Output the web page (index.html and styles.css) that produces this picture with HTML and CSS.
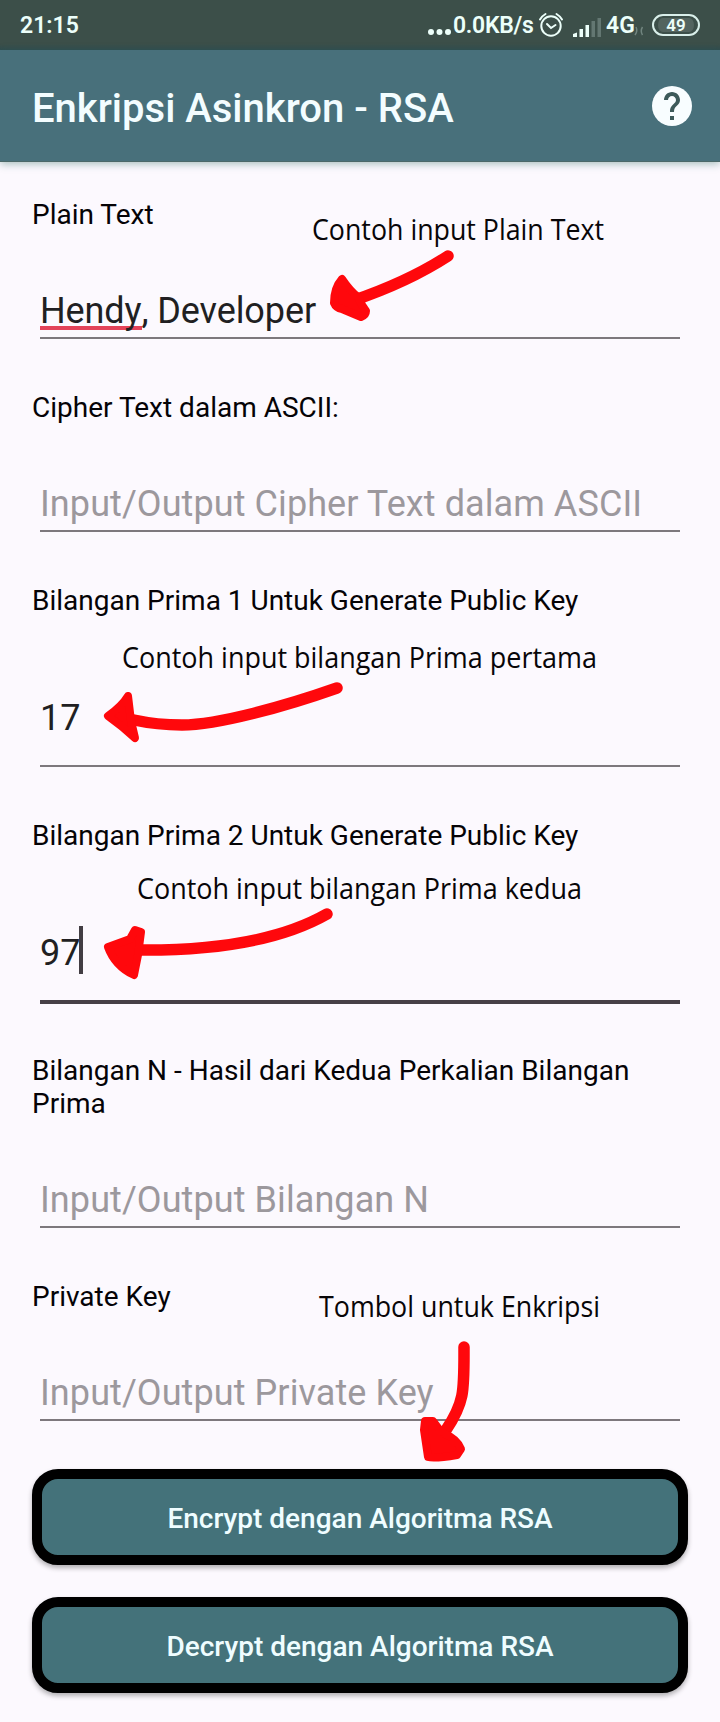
FILE: index.html
```html
<!DOCTYPE html>
<html lang="id">
<head>
<meta charset="utf-8">
<title>Enkripsi Asinkron - RSA</title>
<link rel="stylesheet" href="styles.css">
</head>
<body>
<div class="screen">
  <div class="status">
    <span class="clock">21:15</span>
    <div class="indicators">
      <svg class="dots" width="26" height="8" viewBox="0 0 26 8"><circle cx="4" cy="4" r="3"/><circle cx="12.500" cy="4" r="3"/><circle cx="21" cy="4" r="3"/></svg>
      <span class="speed">0.0KB/s</span>
      <svg class="alarm" width="26" height="26" viewBox="0 0 26 26"><circle cx="13" cy="14" r="9.700"/><path d="M9 12l4 4 4.500-3M2 7.500Q4 4 7.500 2M24 7.500Q22 4 18.500 2"/></svg>
      <svg class="signal" width="30" height="22" viewBox="0 0 30 22"><path d="M1 21v-3l4-1.500V21zM7.500 21v-8h3.500v8zM13.500 21V9H17v12z"/><path class="faint" d="M19.500 21V5H23v16zM25.500 21V2H29v19z"/></svg>
      <span class="net">4G</span>
      <svg class="data" width="10" height="14" viewBox="0 0 10 14"><path d="M1 12q3-4 1-8M8.500 4q-2.500 4 0 8"/></svg>
      <div class="battery"><span class="level">49</span></div>
    </div>
  </div>

  <div class="appbar">
    <h1 class="title">Enkripsi Asinkron - RSA</h1>
    <svg class="help" width="48" height="48" viewBox="0 0 24 24"><circle cx="12" cy="12" r="10" fill="#f8fdff"/><path fill="#3d5a5a" d="M13 19h-2v-2h2v2zm2.070-7.750l-.9.920C13.450 12.900 13 13.500 13 15h-2v-.5c0-1.100.450-2.100 1.170-2.830l1.240-1.260c.370-.360.590-.860.590-1.410 0-1.100-.9-2-2-2s-2 .9-2 2H8c0-2.210 1.790-4 4-4s4 1.790 4 4c0 .880-.360 1.680-.930 2.250z"/></svg>
  </div>

  <div class="form">
    <div class="field">
      <div class="label">Plain Text</div>
      <div class="input entered"><span class="misspelt">Hendy</span>, Developer</div>
    </div>
    <div class="field">
      <div class="label">Cipher Text dalam ASCII:</div>
      <div class="input hint">Input/Output Cipher Text dalam ASCII</div>
    </div>
    <div class="field">
      <div class="label">Bilangan Prima 1 Untuk Generate Public Key</div>
      <div class="input tall">17</div>
    </div>
    <div class="field focused">
      <div class="label">Bilangan Prima 2 Untuk Generate Public Key</div>
      <div class="input tall active">97<span class="caret"></span></div>
    </div>
    <div class="field">
      <div class="label">Bilangan N - Hasil dari Kedua Perkalian Bilangan Prima</div>
      <div class="input hint">Input/Output Bilangan N</div>
    </div>
    <div class="field">
      <div class="label">Private Key</div>
      <div class="input hint">Input/Output Private Key</div>
    </div>
    <div class="actions">
      <div class="button">Encrypt dengan Algoritma RSA</div>
      <div class="button">Decrypt dengan Algoritma RSA</div>
    </div>
  </div>

  <svg class="notes" width="720" height="1722" viewBox="0 0 720 1722">
    <g class="note">
      <text x="312" y="240" textLength="292" lengthAdjust="spacingAndGlyphs">Contoh input Plain Text</text>
      <text x="122" y="668" textLength="475" lengthAdjust="spacingAndGlyphs">Contoh input bilangan Prima pertama</text>
      <text x="137" y="899" textLength="445" lengthAdjust="spacingAndGlyphs">Contoh input bilangan Prima kedua</text>
      <text x="319" y="1317" textLength="281" lengthAdjust="spacingAndGlyphs">Tombol untuk Enkripsi</text>
    </g>
    <g class="shaft">
      <path d="M448 256Q408 282 352 301"/>
      <path d="M337 688C286 706 218 725 182 725C162 725 148 723 134 720"/>
      <path d="M327 914C278 942 210 951 135 950"/>
      <path d="M464 1347C464 1390 465 1402 446 1430"/>
    </g>
    <g class="head">
      <path d="M342 279Q334 288 334 303Q336 308 342 309L361 317Q366 315 366 311L362 305L358 297Q350 291 342 279Z"/>
      <path d="M128 696Q122 706 108 716Q122 726 135 738L131 721Z"/>
      <path d="M135 930L130 939L108 947Q115 966 134 975L138 955L141 932Z"/>
      <path d="M425 1421L424 1430L428 1457Q434 1459 457 1455L461 1449Q457 1439 445 1434Q438 1429 433 1421Z"/>
    </g>
  </svg>
</div>
</body>
</html>
```
FILE: styles.css
```css
* { box-sizing: border-box; }
body { margin: 0; background: #fcfaff; font-family: Roboto, sans-serif; }
.screen { position: relative; width: 720px; height: 1722px; overflow: hidden; background: #fcf9fe; }

.status {
  height: 50px; padding: 0 20px; display: flex; align-items: center; justify-content: space-between;
  background: linear-gradient(#3c4f49 44px, #304c4e 50px); color: #ecfffa;
  font-size: 23px; font-weight: 600; line-height: 26px;
}
.clock { padding-top: 2px; }
.indicators { display: flex; align-items: center; }
.dots { fill: #ecfffa; margin-top: 13px; }
.speed { width: 82px; padding-top: 2px; letter-spacing: -.3px; }
.alarm { margin-left: 3px; fill: none; stroke: #ecfffa; stroke-width: 2; stroke-linecap: round; }
.signal { margin: 3px 0 0 8px; fill: #ecfffa; }
.signal .faint { fill: #637772; }
.net { width: 28px; margin-left: 4px; padding-top: 2px; }
.data { margin: 10px 0 0; fill: none; stroke: #71857f; stroke-width: 1.500; }
.battery {
  width: 48px; height: 22px; margin: -1px 0 0 8px; border: 2px solid #d9efea; border-radius: 11px;
  background: linear-gradient(90deg, #53645f, #53645f) content-box; padding: 2px 4px;
  display: flex; align-items: center; justify-content: center; font-size: 17px; line-height: 18px;
}

.appbar {
  height: 112px; padding: 0 24px 0 32px; display: flex; align-items: center; justify-content: space-between;
  background: #48707b; border-bottom: 1px solid #4b6868; box-shadow: 0 2px 8px rgba(40, 100, 90, .4);
}
.title { margin: 5px 0 0; color: #f3fdff; font-size: 40px; font-weight: 500; line-height: 47px; }

.form { padding: 36px 32px 0; display: flex; flex-direction: column; }
.field { margin-bottom: 52px; }
.focused { margin-bottom: 50px; }
.label { color: #050306; font-size: 28px; line-height: 33px; }
.input {
  margin: 59px 8px 0; padding-bottom: 5px; border-bottom: 2px solid #7d787d;
  color: #211f22; font-size: 36px; line-height: 42px; white-space: nowrap;
}
.entered { letter-spacing: -.1px; }
.tall { margin-top: 80px; padding-bottom: 26px; }
.hint { color: #9c989d; letter-spacing: .08px; }
.active { border-bottom: 4px solid #474047; display: flex; }
.misspelt { display: inline-block; height: 42px; vertical-align: top; background: linear-gradient(#e34359, #e34359) 0 36px / 100% 4px no-repeat; }
.caret { width: 4px; height: 48px; margin: -6px 0 -4px -1px; background: #423d43; }

.actions { margin-top: -4px; display: flex; flex-direction: column; gap: 32px; }
.button {
  height: 96px; padding-top: 2px; border: 10px solid #000; border-radius: 26px; background: #44727a; color: #effdff;
  display: flex; align-items: center; justify-content: center; font-size: 28px; font-weight: 500;
  box-shadow: 0 3px 5px rgba(0, 0, 0, .3);
}

.notes { position: absolute; left: 0; top: 0; }
.note { font-family: "Open Sans", "Noto Sans", sans-serif; font-size: 29px; fill: #080608; }
.shaft { fill: none; stroke: #ff080c; stroke-width: 11.500; stroke-linecap: round; stroke-linejoin: round; }
.head { fill: #ff080c; stroke: #ff080c; stroke-width: 8; stroke-linejoin: round; }
```
